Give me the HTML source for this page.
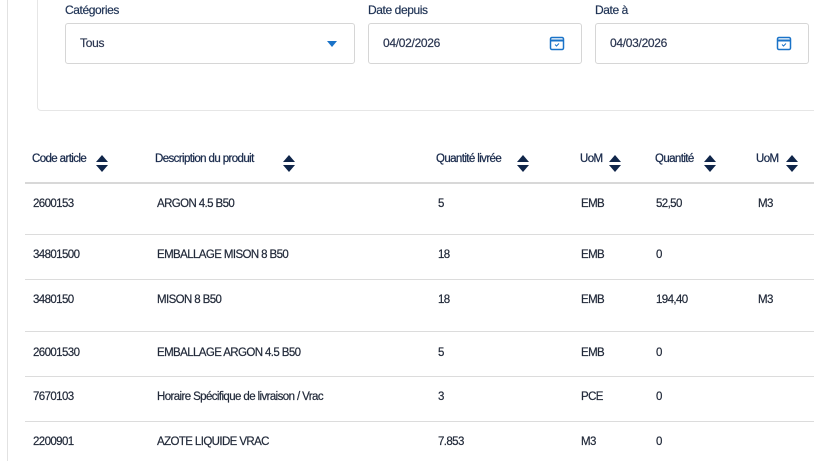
<!DOCTYPE html>
<html><head><meta charset="utf-8"><style>
*{box-sizing:border-box;margin:0;padding:0}
body{width:814px;height:461px;overflow:hidden;background:#fff;font-family:"Liberation Sans",sans-serif;position:relative;color:#1f2d4a}
.vl{position:absolute;left:7px;top:0;width:1px;height:461px;background:#e2e2e2}
.card{position:absolute;left:37px;top:-10px;width:800px;height:121px;border:1px solid #e6e6e6;border-radius:4px}
.lbl{position:absolute;top:3px;font-size:12px;color:#1f3355;letter-spacing:-0.4px;-webkit-text-stroke:0.2px #1f3355}
.inp{position:absolute;top:23px;height:41px;border:1px solid #d6d6d6;border-radius:3px;font-size:12px;color:#2a3550;padding:12px 0 0 14px;letter-spacing:-0.3px;-webkit-text-stroke:0.2px #2a3550}
.t{position:absolute;font-size:11.5px;letter-spacing:-0.6px;white-space:nowrap;color:#222a3a;-webkit-text-stroke:0.2px #222a3a}
.h{top:153px;color:#1a2b4c;-webkit-text-stroke:0.25px #1a2b4c}
.sep{position:absolute;left:25px;width:800px;height:1px;background:#dcdcdc}
.srt{position:absolute;top:154px;width:12px;height:19px}
</style></head><body>
<div class="vl"></div>
<div class="card"></div>
<div class="lbl" style="left:65px">Catégories</div>
<div class="lbl" style="left:368px">Date depuis</div>
<div class="lbl" style="left:595px">Date à</div>
<div class="inp" style="left:65px;width:290px">Tous
<svg style="position:absolute;left:261px;top:17px" width="10" height="6"><path d="M0 0H10L5 6Z" fill="#1a73c8"/></svg></div>
<div class="inp" style="left:368px;width:214px">04/02/2026
<svg style="position:absolute;left:180px;top:11px" width="16" height="16" viewBox="0 0 16 16"><rect x="1.5" y="2.5" width="13" height="12" rx="1.5" fill="none" stroke="#1a73c8" stroke-width="1.5"/><path d="M1.5 5.5H14.5" stroke="#1a73c8" stroke-width="2"/><path d="M6 9.5l1.5 1.5 2.5-2.5" fill="none" stroke="#1a73c8" stroke-width="1"/></svg></div>
<div class="inp" style="left:595px;width:214px">04/03/2026
<svg style="position:absolute;left:180px;top:11px" width="16" height="16" viewBox="0 0 16 16"><rect x="1.5" y="2.5" width="13" height="12" rx="1.5" fill="none" stroke="#1a73c8" stroke-width="1.5"/><path d="M1.5 5.5H14.5" stroke="#1a73c8" stroke-width="2"/><path d="M6 9.5l1.5 1.5 2.5-2.5" fill="none" stroke="#1a73c8" stroke-width="1"/></svg></div>

<div class="t h" style="left:32px">Code article</div>
<div class="t h" style="left:155px">Description du produit</div>
<div class="t h" style="left:436px">Quantité livrée</div>
<div class="t h" style="left:580px">UoM</div>
<div class="t h" style="left:655px">Quantité</div>
<div class="t h" style="left:756px">UoM</div>
<svg class="srt" style="left:96px" viewBox="0 0 12 19"><path d="M0 8L6 1L12 8Z M0 11L6 18L12 11Z" fill="#10264a"/></svg>
<svg class="srt" style="left:283px" viewBox="0 0 12 19"><path d="M0 8L6 1L12 8Z M0 11L6 18L12 11Z" fill="#10264a"/></svg>
<svg class="srt" style="left:517px" viewBox="0 0 12 19"><path d="M0 8L6 1L12 8Z M0 11L6 18L12 11Z" fill="#10264a"/></svg>
<svg class="srt" style="left:609px" viewBox="0 0 12 19"><path d="M0 8L6 1L12 8Z M0 11L6 18L12 11Z" fill="#10264a"/></svg>
<svg class="srt" style="left:704px" viewBox="0 0 12 19"><path d="M0 8L6 1L12 8Z M0 11L6 18L12 11Z" fill="#10264a"/></svg>
<svg class="srt" style="left:786px" viewBox="0 0 12 19"><path d="M0 8L6 1L12 8Z M0 11L6 18L12 11Z" fill="#10264a"/></svg>
<div class="sep" style="top:182px;height:2px;background:#d8d8d8"></div>

<div class="t" style="left:33px;top:198px">2600153</div><div class="t" style="left:157px;top:198px">ARGON 4.5 B50</div><div class="t" style="left:438px;top:198px">5</div><div class="t" style="left:581px;top:198px">EMB</div><div class="t" style="left:656px;top:198px">52,50</div><div class="t" style="left:758px;top:198px">M3</div>
<div class="sep" style="top:234px"></div>
<div class="t" style="left:33px;top:249px">34801500</div><div class="t" style="left:157px;top:249px">EMBALLAGE MISON 8 B50</div><div class="t" style="left:438px;top:249px">18</div><div class="t" style="left:581px;top:249px">EMB</div><div class="t" style="left:656px;top:249px">0</div>
<div class="sep" style="top:279px"></div>
<div class="t" style="left:33px;top:294px">3480150</div><div class="t" style="left:157px;top:294px">MISON 8 B50</div><div class="t" style="left:438px;top:294px">18</div><div class="t" style="left:581px;top:294px">EMB</div><div class="t" style="left:656px;top:294px">194,40</div><div class="t" style="left:758px;top:294px">M3</div>
<div class="sep" style="top:331px"></div>
<div class="t" style="left:33px;top:347px">26001530</div><div class="t" style="left:157px;top:347px">EMBALLAGE ARGON 4.5 B50</div><div class="t" style="left:438px;top:347px">5</div><div class="t" style="left:581px;top:347px">EMB</div><div class="t" style="left:656px;top:347px">0</div>
<div class="sep" style="top:376px"></div>
<div class="t" style="left:33px;top:391px">7670103</div><div class="t" style="left:157px;top:391px">Horaire Spécifique de livraison / Vrac</div><div class="t" style="left:438px;top:391px">3</div><div class="t" style="left:581px;top:391px">PCE</div><div class="t" style="left:656px;top:391px">0</div>
<div class="sep" style="top:421px"></div>
<div class="t" style="left:33px;top:436px">2200901</div><div class="t" style="left:157px;top:436px">AZOTE LIQUIDE VRAC</div><div class="t" style="left:438px;top:436px">7.853</div><div class="t" style="left:581px;top:436px">M3</div><div class="t" style="left:656px;top:436px">0</div>
</body></html>
